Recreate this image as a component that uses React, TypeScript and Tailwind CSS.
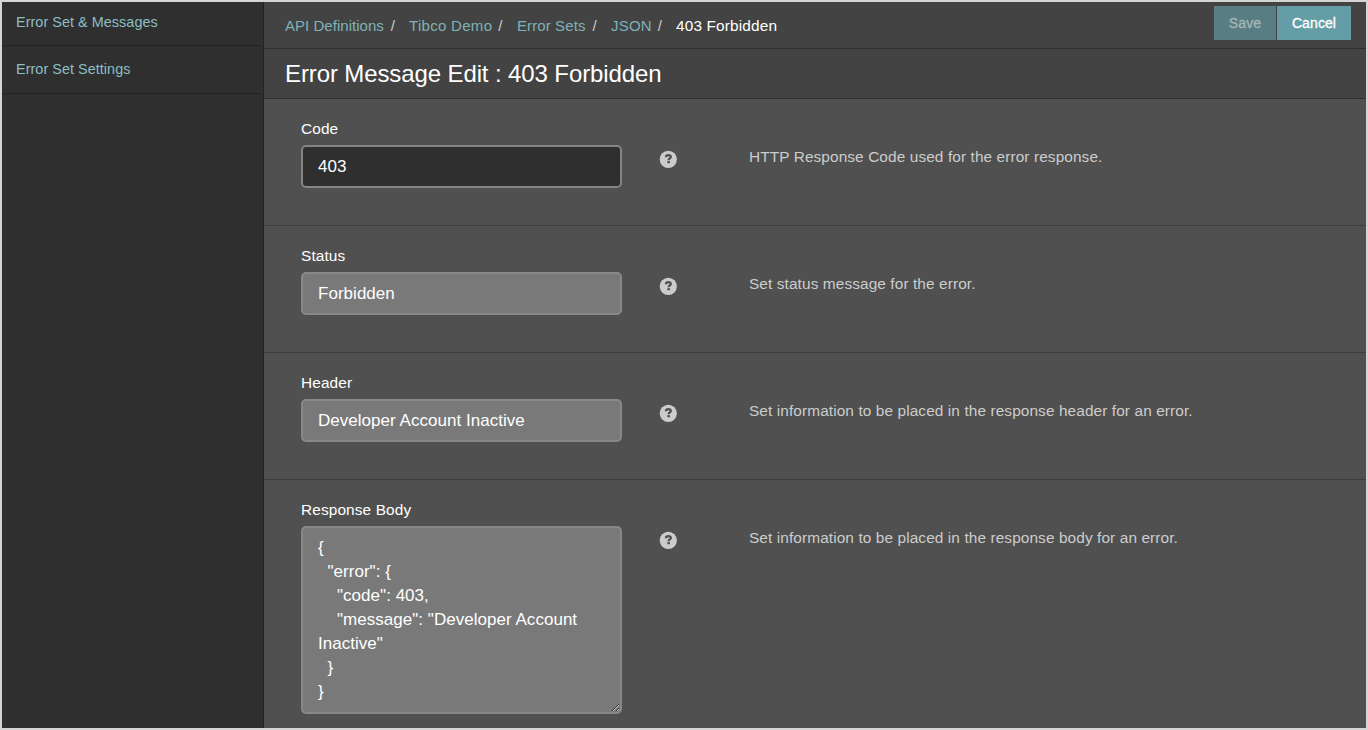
import React from "react";

const NAV = ["Error Set & Messages", "Error Set Settings"];
const CRUMBS = [
  { label: "API Definitions", cls: "w-[124px] gap-[7px]", text: "tracking-[0.03px]" },
  { label: "Tibco Demo", cls: "w-[108px] gap-[6px]", text: "tracking-[0.3px]" },
  { label: "Error Sets", cls: "w-[94px] gap-[7px]", text: "tracking-[0.1px]" },
  { label: "JSON", cls: "w-[65px] gap-[6px]", text: "tracking-[0.2px]" },
];

function HelpIcon() {
  return (
    <svg viewBox="0 0 18 18" className="mt-[5px] block h-[18px] w-[18px] shrink-0" aria-hidden="true">
      <circle cx="9.3" cy="9.3" r="8.6" fill="#cccccc" />
      <path d="M6.9 7.3C7 5.6 7.8 5.1 9.3 5.1c1.7 0 2.5.7 2.5 1.8 0 1.6-2.2 1.4-2.2 3.3" fill="none" stroke="#505050" strokeWidth="2.3" />
      <rect x="8.3" y="11.2" width="2.7" height="2" fill="#505050" />
    </svg>
  );
}

function Row({ label, help, last, children }: { label: string; help: string; last?: boolean; children: React.ReactNode }) {
  return (
    <section className={last ? "flex-1 pl-[37px] pt-[21px]" : "h-[127px] shrink-0 border-b border-[#3e3e3e] pl-[37px] pt-[21px]"}>
      <div className="h-[25px] text-[15.4px] leading-[18px] tracking-[0.12px] text-white">{label}</div>
      <div className="flex items-start">
        <div className="w-[321px] shrink-0">{children}</div>
        <div className="flex w-[127px] shrink-0 justify-start pl-[37px]">
          <HelpIcon />
        </div>
        <p className="mt-[3px] whitespace-nowrap text-[15.4px] leading-[18px] tracking-[0.1px] text-[#cccccc]">{help}</p>
      </div>
    </section>
  );
}

const FIELD = "block h-[43px] w-full rounded-[5px] border-2 px-[15px] text-[17px] tracking-[0.03px] text-white outline-none";

export default function App() {
  return (
    <div className="flex h-[730px] w-[1368px] overflow-hidden border-2 border-[#d5d5d5] bg-[#505050] font-['Liberation_Sans',Arial,sans-serif]">
      <aside className="w-[262px] shrink-0 border-r border-[#222222] bg-[#2f2f2f]">
        {NAV.map((n, i) => (
          <a
            key={n}
            className={
              (i === 0 ? "h-[44px] pt-[11px] " : "h-[48px] pt-[14px] ") +
              "mr-[2px] box-border block border-b border-[#222222] pl-[14px] text-[14.4px] leading-[18px] tracking-[0.05px] text-[#8bbfc4]"
            }
          >
            {n}
          </a>
        ))}
      </aside>
      <main className="flex min-w-0 flex-1 flex-col">
        <header className="flex h-[47px] shrink-0 border-b border-[#303030] bg-[#434343] pl-[21px] text-[15px] leading-[18px]">
          <nav className="flex flex-1 pt-[15px]">
            {CRUMBS.map((c) => (
              <span key={c.label} className={"flex shrink-0 whitespace-nowrap " + c.cls}>
                <a className={"text-[#7fb2b7] " + c.text}>{c.label}</a>
                <span className="text-[#cccccc]">/</span>
              </span>
            ))}
            <span className="text-[15.4px] tracking-[0.14px] text-white">403 Forbidden</span>
          </nav>
          <div className="mr-[15px] mt-[4px] flex h-[34px] gap-px text-[14px] tracking-[0.1px] [-webkit-text-stroke:0.3px]">
            <button className="w-[62px] bg-[#587d82] text-[#a9b5b7]">Save</button>
            <button className="w-[74px] bg-[#659da6] text-white">Cancel</button>
          </div>
        </header>
        <h1 className="h-[50px] shrink-0 border-b border-[#303030] bg-[#434343] pl-[21px] pt-[11px] text-[24px] leading-[28px] tracking-[-0.11px] text-white">
          Error Message Edit : 403 Forbidden
        </h1>
        <Row label="Code" help="HTTP Response Code used for the error response.">
          <input className={FIELD + " border-[#858585] bg-[#2f2f2f]"} defaultValue="403" />
        </Row>
        <Row label="Status" help="Set status message for the error.">
          <input className={FIELD + " border-[#888888] bg-[#797979]"} defaultValue="Forbidden" />
        </Row>
        <Row label="Header" help="Set information to be placed in the response header for an error.">
          <input className={FIELD + " border-[#888888] bg-[#797979]"} defaultValue="Developer Account Inactive" />
        </Row>
        <Row label="Response Body" help="Set information to be placed in the response body for an error." last>
          <textarea
            className="block h-[188px] w-full resize overflow-hidden rounded-[5px] border-2 border-[#888888] bg-[#797979] px-[15px] py-[8px] text-[17px] leading-[24px] tracking-[0.03px] text-white outline-none"
            defaultValue={'{\n  "error": {\n    "code": 403,\n    "message": "Developer Account Inactive"\n  }\n}'}
          />
        </Row>
      </main>
    </div>
  );
}
